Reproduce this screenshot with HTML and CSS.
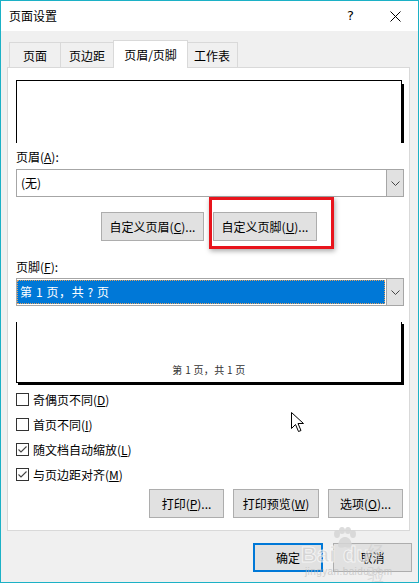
FILE: index.html
```html
<!DOCTYPE html>
<html lang="zh-CN">
<head>
<meta charset="utf-8">
<title>页面设置</title>
<link rel="stylesheet" href="styles.css">
</head>
<body>
<div class="window">
  <div class="titlebar">
    <span class="title">页面设置</span>
    <span class="help">?</span>
    <svg class="close" width="11" height="11" viewBox="0 0 11 11"><path d="M0.5 0.5 L10.5 10.5 M10.5 0.5 L0.5 10.5" stroke="#000" stroke-width="1" fill="none"/></svg>
  </div>
  <div class="body">
    <div class="tabs">
      <div class="tab t1">页面</div>
      <div class="tab t2">页边距</div>
      <div class="tab active">页眉/页脚</div>
      <div class="tab t4">工作表</div>
    </div>
    <div class="panel">
      <div class="preview preview-head"></div>
      <div class="label label-head">页眉(<u>A</u>):</div>
      <div class="combo">
        <div class="combo-text">(无)</div>
        <div class="combo-btn"><svg width="9" height="5" viewBox="0 0 9 5"><path d="M0.5 0.5 L4.5 4.5 L8.5 0.5" stroke="#444" fill="none"/></svg></div>
      </div>
      <div class="btn-row row-custom">
        <div class="btn b-head">自定义页眉(<u>C</u>)...</div>
        <div class="btn b-foot">自定义页脚(<u>U</u>)...</div>
        <div class="highlight"></div>
      </div>
      <div class="label label-foot">页脚(<u>F</u>):</div>
      <div class="combo combo-foot">
        <div class="combo-text"><span class="sel">第 1 页，共 ? 页</span></div>
        <div class="combo-btn"><svg width="9" height="5" viewBox="0 0 9 5"><path d="M0.5 0.5 L4.5 4.5 L8.5 0.5" stroke="#444" fill="none"/></svg></div>
      </div>
      <div class="preview preview-foot"><span>第 1 页，共 1 页</span></div>
      <div class="checks">
        <div class="check"><span class="box"></span>奇偶页不同(<u>D</u>)</div>
        <div class="check"><span class="box"></span>首页不同(<u>I</u>)</div>
        <div class="check"><span class="box"><svg width="11" height="11" viewBox="0 0 11 11"><path d="M1.5 5.5 L4 8 L9.5 2.5" stroke="#444" stroke-width="1.1" fill="none"/></svg></span>随文档自动缩放(<u>L</u>)</div>
        <div class="check"><span class="box"><svg width="11" height="11" viewBox="0 0 11 11"><path d="M1.5 5.5 L4 8 L9.5 2.5" stroke="#444" stroke-width="1.1" fill="none"/></svg></span>与页边距对齐(<u>M</u>)</div>
      </div>
      <div class="btn-row row-print">
        <div class="btn b-print">打印(<u>P</u>)...</div>
        <div class="btn b-preview">打印预览(<u>W</u>)</div>
        <div class="btn b-options">选项(<u>O</u>)...</div>
      </div>
    </div>
    <div class="footer">
      <div class="btn b-ok">确定</div>
      <div class="btn b-cancel">取消</div>
    </div>
  </div>
  <div class="watermark">
    <svg class="paw" width="26" height="22" viewBox="0 0 26 22"><g fill="#d6d6d6"><ellipse cx="6" cy="7" rx="3" ry="4"/><ellipse cx="11" cy="3.5" rx="3" ry="3.5"/><ellipse cx="17" cy="3.5" rx="3" ry="3.5"/><ellipse cx="22" cy="7" rx="3" ry="4"/><path d="M7 18 C8 12 11 10 14 10 C17 10 20 12 21 18 C21 21 18 21 14 20 C10 21 7 21 7 18 Z"/></g></svg>
    <span class="wm-bai">Bai</span><span class="wm-du">du</span><span class="wm-jy">经验</span>
    <span class="wm-url">jingyan.baidu.com</span>
  </div>
  <svg class="cursor" width="14" height="21" viewBox="0 0 14 21"><path d="M0.5 0.5 L0.5 16.5 L4.5 12.5 L7.5 19.5 L10 18.5 L7 11.5 L12.5 11.5 Z" fill="#fff" stroke="#000" stroke-width="1"/></svg>
</div>
</body>
</html>
```
FILE: styles.css
```css
* { box-sizing: border-box; }
html, body { margin: 0; padding: 0; background: #fff; }
body {
  font-family: "Noto Sans CJK SC", "Noto Sans", sans-serif;
  font-size: 12px;
  color: #000;
}
u { text-decoration: underline; text-underline-offset: 1px; }
.window {
  position: relative;
  width: 419px;
  height: 583px;
  border: 1px solid #1cb1c6;
  background: #f0f0f0;
  overflow: hidden;
}
.titlebar {
  height: 30px;
  background: #fff;
  display: flex;
  align-items: center;
  padding-left: 8px;
}
.title { font-size: 12px; line-height: 16px; }
.help { margin-left: auto; margin-right: 36px; font-family: "DejaVu Sans", sans-serif; font-size: 13px; line-height: 16px; }
.close { margin-right: 17px; }
.body {
  height: 551px;
  padding-top: 9px;
}
.tabs {
  display: flex;
  align-items: flex-end;
  height: 27px;
  padding-left: 8px;
}
.tab {
  height: 25px;
  border: 1px solid #d9d9d9;
  border-bottom: none;
  background: #f0f0f0;
  display: flex;
  align-items: center;
  justify-content: center;
  line-height: 16px;
  margin-left: -1px;
  padding-top: 2px;
}
.t1 { width: 52px; margin-left: 0; }
.t2 { width: 54px; }
.tab.active {
  width: 75px;
  height: 28px;
  margin-bottom: -1px;
  background: #fff;
  position: relative;
  z-index: 1;
  padding-top: 0;
}
.t4 { width: 51px; justify-content: flex-start; padding-left: 6px; }
.panel {
  margin-left: 6px;
  width: 403px;
  height: 464px;
  border: 1px solid #d9d9d9;
  background: #fff;
  padding: 12px 0 0 8px;
}
.preview {
  position: relative;
  width: 386px;
  border: 1px solid #000;
}
.preview-head {
  height: 63px;
  border-bottom: none;
}
.preview-head::after {
  content: "";
  position: absolute;
  right: -3px;
  top: 3px;
  bottom: 0;
  width: 2px;
  background: #000;
}
.preview-foot {
  margin-top: 16px;
  height: 61px;
  border-top: none;
  box-shadow: 2px 2px 0 #000;
  display: flex;
  align-items: flex-end;
  justify-content: center;
  padding-bottom: 6px;
}
.preview-foot span {
  font-size: 10px;
  line-height: 13px;
  color: #333;
  letter-spacing: 0.3px;
}
.label { line-height: 18px; }
.label-head { margin-top: 5px; }
.label-foot { margin-top: 17px; }
.combo {
  margin-top: 3px;
  width: 388px;
  height: 28px;
  border: 1px solid #a6a6a6;
  display: flex;
}
.combo-foot { margin-top: 2px; }
.combo-text {
  flex: 1;
  display: flex;
  align-items: center;
  padding-left: 4px;
  line-height: 16px;
}
.combo-foot .combo-text {
  padding: 1px 1px 1px 0;
}
.combo-foot .sel {
  display: flex;
  align-items: center;
  width: 100%;
  height: 100%;
  background: #0078d7;
  color: #fff;
  padding-left: 3px;
  outline: 1px dotted #e0a060;
  outline-offset: -1px;
  letter-spacing: 0.6px;
}
.combo-btn {
  width: 17px;
  background: #e1e1e1;
  border-left: 1px solid #a6a6a6;
  display: flex;
  align-items: center;
  justify-content: center;
}
.btn-row {
  position: relative;
  display: flex;
  gap: 9px;
}
.row-custom { margin-top: 15px; padding-left: 85px; }
.row-print { margin-top: 2px; padding-left: 133px; }
.btn {
  height: 29px;
  background: #e1e1e1;
  border: 1px solid #adadad;
  display: flex;
  align-items: center;
  justify-content: center;
  line-height: 16px;
  white-space: nowrap;
}
.b-head { width: 103px; }
.b-foot { width: 104px; }
.b-print { width: 75px; }
.b-preview { width: 86px; }
.b-options { width: 75px; }
.highlight {
  position: absolute;
  left: 193px;
  top: -15px;
  width: 125px;
  height: 52px;
  border: 3px solid #e8141c;
  box-shadow: 1px 2px 5px rgba(0,0,0,0.35);
}
.checks { margin-top: 4px; }
.check {
  height: 25px;
  display: flex;
  align-items: center;
  line-height: 16px;
}
.box {
  width: 13px;
  height: 13px;
  border: 1px solid #333;
  background: #fff;
  margin-right: 4px;
  display: flex;
  align-items: center;
  justify-content: center;
}
.footer {
  display: flex;
  margin-top: 12px;
  padding-left: 252px;
  gap: 10px;
}
.b-ok { width: 70px; border: 2px solid #0078d7; }
.b-cancel { width: 79px; }
.watermark {
  position: absolute;
  left: 298px;
  top: 526px;
  width: 100px;
  height: 50px;
  color: #d2d2d2;
  opacity: 0.85;
  pointer-events: none;
}
.paw { position: absolute; left: 32px; top: 0; }
.wm-bai, .wm-du {
  position: absolute;
  top: 16px;
  font-family: "Liberation Sans", sans-serif;
  font-weight: bold;
  font-size: 22px;
  line-height: 24px;
  color: rgba(205,205,205,0.75);
  -webkit-text-stroke: 1px rgba(255,255,255,0.8);
}
.wm-bai { left: 2px; }
.wm-du { left: 44px; }
.wm-jy {
  position: absolute;
  left: 68px;
  top: 14px;
  font-size: 17px;
  line-height: 22px;
  color: rgba(205,205,205,0.75);
}
.wm-url {
  position: absolute;
  left: 6px;
  top: 39px;
  font-family: "Liberation Sans", sans-serif;
  font-size: 10px;
  line-height: 11px;
  color: rgba(190,190,190,0.8);
  letter-spacing: 0.4px;
}
.cursor { position: absolute; left: 290px; top: 411px; }
```
